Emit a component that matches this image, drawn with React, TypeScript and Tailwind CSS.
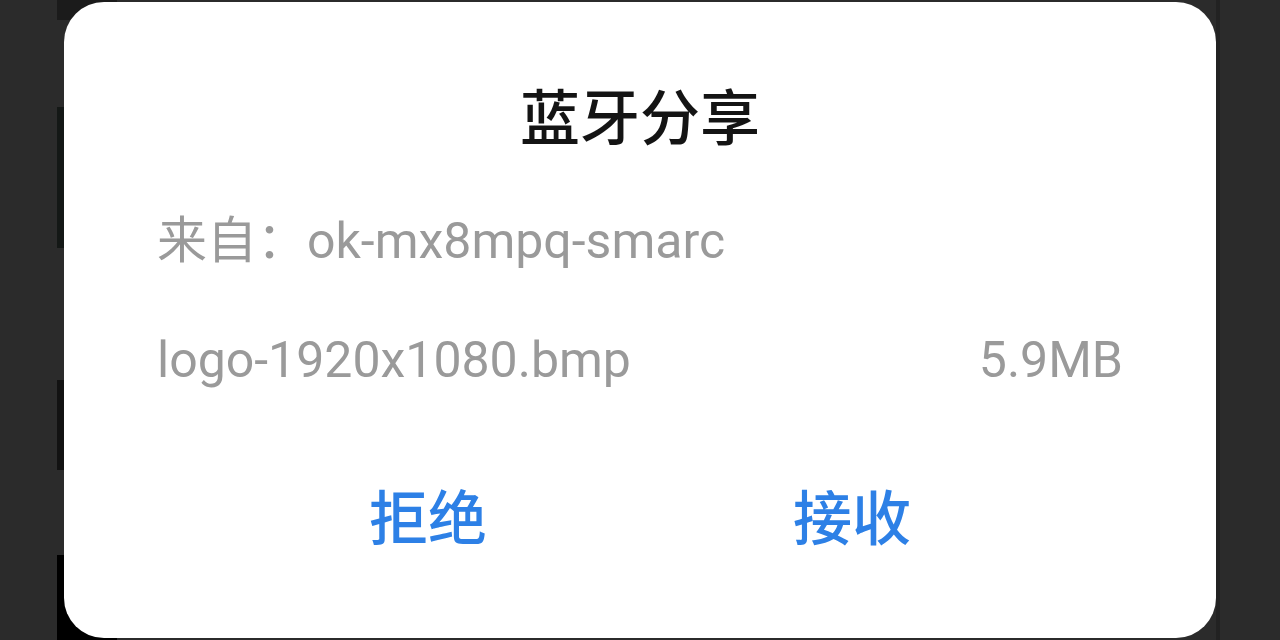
import React from "react";

const font = { fontFamily: "Roboto, 'Noto Sans CJK SC', sans-serif" };

export default function App() {
  return (
    <div className="relative h-[640px] w-[1280px] overflow-hidden bg-[#2b2b2b]" style={font}>
      {/* content beneath the dialog */}
      <div className="absolute left-[57px] top-0 flex h-full w-[60px] flex-col">
        <div className="h-[20px] bg-[#1b1b1b]" />
        <div className="h-[87px]" />
        <div className="h-[141px] bg-[#141816]" />
        <div className="h-[132px]" />
        <div className="h-[90px] bg-[#121212]" />
        <div className="h-[85px]" />
        <div className="flex-1 bg-black" />
      </div>
      <div className="absolute left-[1216px] top-0 h-full w-[4px] bg-[#222]" />

      {/* dialog */}
      <div className="relative ml-[64px] mt-[2px] flex h-[636px] w-[1152px] flex-col rounded-[40px] bg-white px-[93px]">
        <div className="mt-[82px] text-center text-[60px] font-medium leading-[72px] text-[#141414]">
          蓝牙分享
        </div>
        <div className="mt-[55px] text-[50px] leading-[60px] text-[#9a9a9a]">
          来自：ok-mx8mpq-smarc
        </div>
        <div className="mt-[59px] flex items-center justify-between text-[50px] leading-[60px] text-[#9a9a9a]">
          <span>logo-1920x1080.bmp</span>
          <span>5.9MB</span>
        </div>
        <div className="mt-[95px] flex justify-center gap-[306px] text-[59px] font-medium leading-[70px] text-[#2d80e6]">
          <button className="cursor-pointer">拒绝</button>
          <button className="cursor-pointer">接收</button>
        </div>
      </div>
    </div>
  );
}
